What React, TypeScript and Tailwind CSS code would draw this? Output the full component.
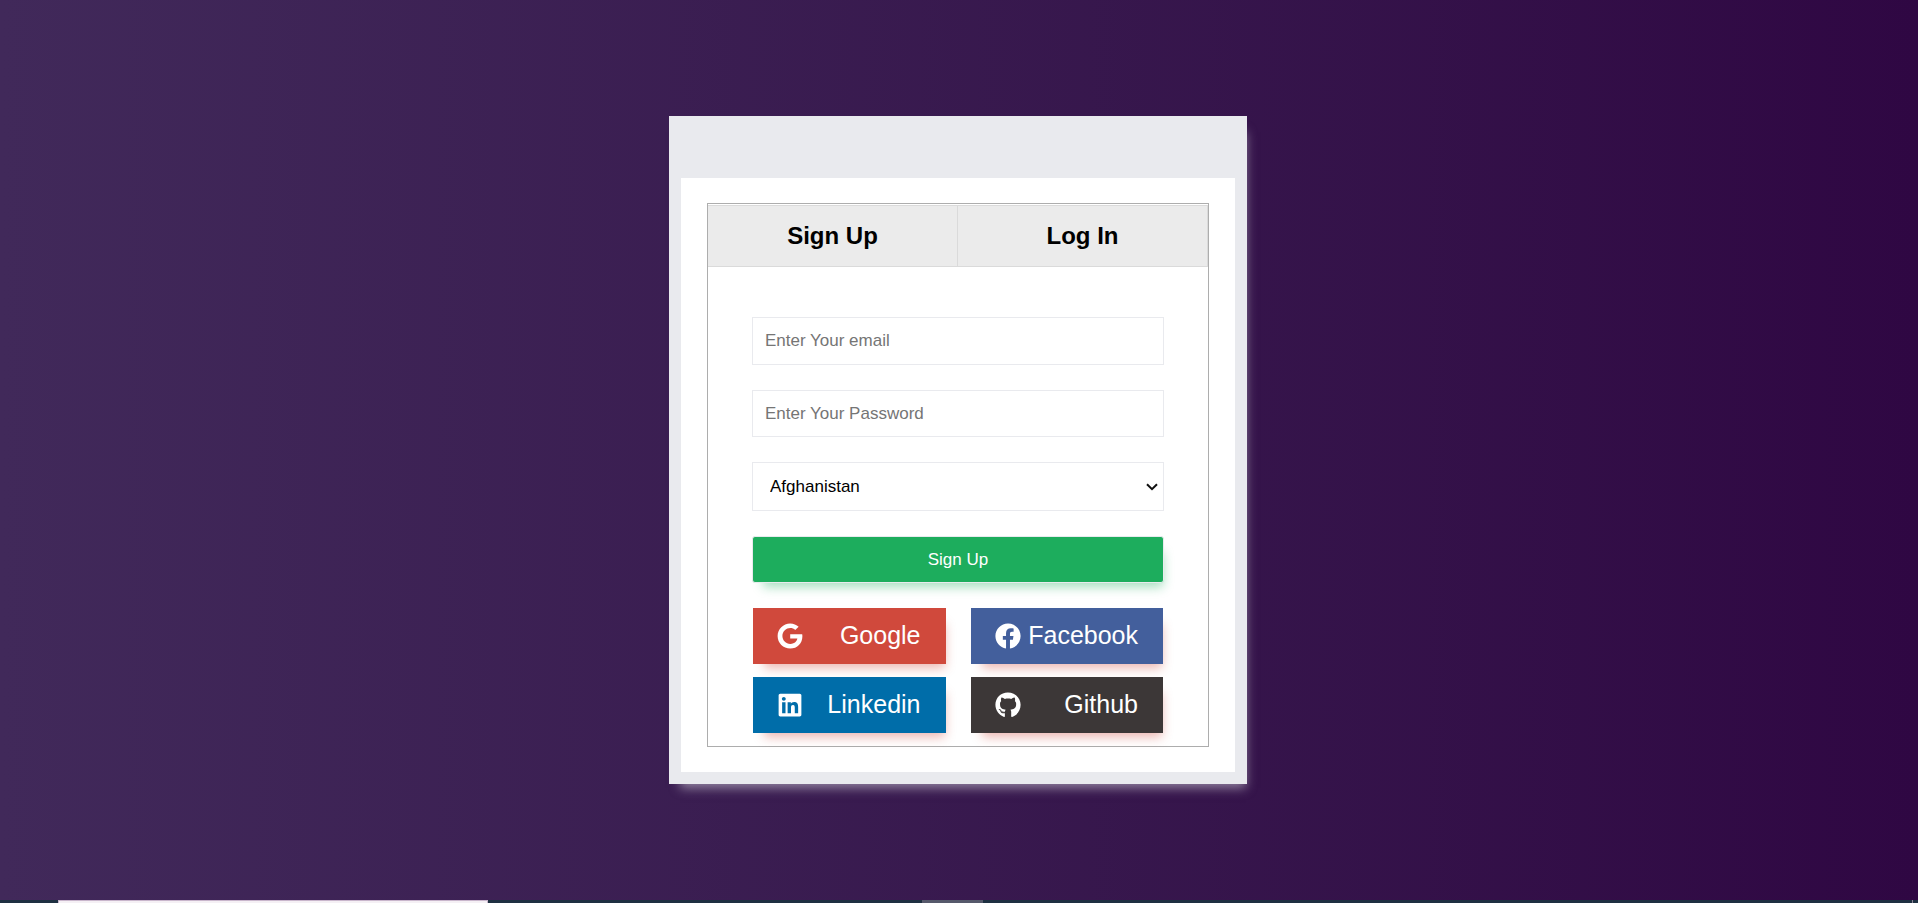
import { useState } from 'react';
import type { IconType } from 'react-icons';
import { FaFacebook, FaGithub, FaGoogle, FaLinkedin } from 'react-icons/fa';

const tabs = ['Sign Up', 'Log In'];

const countries = ['Afghanistan', 'Albania', 'Algeria', 'Andorra', 'Angola', 'Argentina'];

const providers: { name: string; icon: IconType; color: string }[] = [
  { name: 'Google', icon: FaGoogle, color: 'bg-[#d0493c]' },
  { name: 'Facebook', icon: FaFacebook, color: 'bg-[#435f9c]' },
  { name: 'Linkedin', icon: FaLinkedin, color: 'bg-[#006da9]' },
  { name: 'Github', icon: FaGithub, color: 'bg-[#3c3737]' },
];

const field =
  'w-full border border-[#e9eaee] bg-white px-3 text-[17px] text-black outline-none placeholder:text-[#757575]';

function Tabs({ active, onSelect }: { active: string; onSelect: (tab: string) => void }) {
  return (
    <div className="mt-px grid grid-cols-2" role="tablist">
      {tabs.map((tab) => (
        <button
          key={tab}
          type="button"
          role="tab"
          aria-selected={tab === active}
          onClick={() => onSelect(tab)}
          className="h-[62px] border-y border-r border-[#dadada] bg-[#ebebeb] text-2xl font-bold text-black"
        >
          {tab}
        </button>
      ))}
    </div>
  );
}

function SocialButton({ name, icon: Icon, color }: { name: string; icon: IconType; color: string }) {
  return (
    <button
      type="button"
      className={`flex h-14 items-center justify-between pr-[25px] pl-6 text-[25px] text-white shadow-[5px_10px_10px_-6px_rgba(208,73,60,0.4)] ${color}`}
    >
      <Icon className="h-[26px] w-auto" aria-hidden="true" />
      {name}
    </button>
  );
}

function Taskbar() {
  return (
    <div className="flex h-[3px] bg-[#1e3041]">
      <div className="ml-[58px] w-[430px] border-x border-t border-[#c9b6cc] bg-[#f5f0f5]" />
      <div className="ml-[434px] w-[61px] bg-[#56596b]" />
      <div className="mr-[5px] ml-auto w-px bg-[#8a8496]" />
    </div>
  );
}

export default function App() {
  const [active, setActive] = useState('Sign Up');
  return (
    <div className="flex min-h-screen flex-col bg-linear-to-r from-[#41295a] to-[#2f0743] font-['Liberation_Sans',Arial,sans-serif]">
      <main className="flex flex-1 items-center justify-center pr-[18px] pl-4">
        <div className="w-full max-w-[578px] bg-[#e9eaee] px-3 pt-[62px] pb-3 shadow-[5px_10px_10px_-6px_rgba(233,234,238,0.5)]">
          <div className="bg-white px-[26px] py-[25px]">
            <div className="border border-[#adadad]">
              <Tabs active={active} onSelect={setActive} />
              <form className="px-11 pt-[50px] pb-[13px]" onSubmit={(event) => event.preventDefault()}>
                <div className="flex flex-col gap-[25px]">
                  <input type="email" aria-label="Email" placeholder="Enter Your email" className={`${field} h-12`} />
                  <input type="password" aria-label="Password" placeholder="Enter Your Password" className={`${field} h-[47px]`} />
                  <div className="relative">
                    <select aria-label="Country" className={`${field} block h-[49px] appearance-none pl-[17px]`}>
                      {countries.map((country) => (
                        <option key={country}>{country}</option>
                      ))}
                    </select>
                    <svg
                      viewBox="0 0 12 8"
                      className="pointer-events-none absolute top-1/2 right-[6px] h-2 w-3 -translate-y-1/2"
                      fill="none"
                      stroke="#101010"
                      strokeWidth="2"
                      aria-hidden="true"
                    >
                      <path d="M1 1.2 L6 6.2 L11 1.2" />
                    </svg>
                  </div>
                  <button
                    type="submit"
                    className="h-[47px] rounded-[3px] border border-[#e9eaee] bg-[#1dad5d] text-[17px] text-white shadow-[5px_10px_10px_-6px_rgba(29,173,93,0.4)]"
                  >
                    {active}
                  </button>
                </div>
                <div className="mt-[25px] grid grid-cols-2 gap-x-[25px] gap-y-[13px] px-px">
                  {providers.map((provider) => (
                    <SocialButton key={provider.name} {...provider} />
                  ))}
                </div>
              </form>
            </div>
          </div>
        </div>
      </main>
      <Taskbar />
    </div>
  );
}
